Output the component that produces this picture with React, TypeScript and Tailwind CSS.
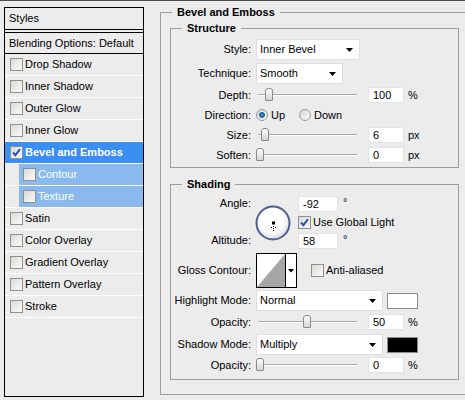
import React from "react";

const styleRows: { name: string; checked?: boolean; selected?: boolean; sub?: boolean }[] = [
  { name: "Drop Shadow" },
  { name: "Inner Shadow" },
  { name: "Outer Glow" },
  { name: "Inner Glow" },
  { name: "Bevel and Emboss", checked: true, selected: true },
  { name: "Contour", sub: true },
  { name: "Texture", sub: true },
  { name: "Satin" },
  { name: "Color Overlay" },
  { name: "Gradient Overlay" },
  { name: "Pattern Overlay" },
  { name: "Stroke" },
];

function Checkbox({ checked = false }: { checked?: boolean }) {
  return (
    <span className="flex h-[13px] w-[13px] shrink-0 items-center justify-center border border-[#8f8f8f] bg-gradient-to-br from-[#d9d9d4] to-[#fbfbfa]">
      {checked && (
        <svg width="9" height="9" viewBox="0 0 9 9">
          <path d="M1 4.5 L3.4 7.2 L8 1.2" fill="none" stroke="#2a4fb4" strokeWidth="1.9" />
        </svg>
      )}
    </span>
  );
}

function Radio({ checked = false }: { checked?: boolean }) {
  return (
    <span className="flex h-[12px] w-[12px] shrink-0 items-center justify-center rounded-full border border-[#9a9a9a] bg-gradient-to-br from-[#d6d6d2] to-[#fafafa]">
      {checked && <span className="h-[6px] w-[6px] rounded-full border border-[#1b4f86] bg-[#2f86c9]" />}
    </span>
  );
}

function Select({ value, className }: { value: string; className: string }) {
  return (
    <div className={`flex h-[21px] items-center justify-between border border-[#dedede] bg-white pl-[3px] pr-[6px] ${className}`}>
      <span>{value}</span>
      <svg width="7" height="4" viewBox="0 0 7 4">
        <path d="M0 0 H7 L3.5 4 Z" fill="#000" />
      </svg>
    </div>
  );
}

function NumInput({ value }: { value: string }) {
  return (
    <div className="flex h-[16px] w-[36px] items-center border border-[#e2e2e2] bg-white pl-[4px]">
      {value}
    </div>
  );
}

function Slider({ pos }: { pos: number }) {
  return (
    <div className="relative flex h-[16px] w-[104px] items-center">
      <div className="ml-[2px] h-[2px] w-[99px] border-t border-[#a9a9a9] border-b border-b-white" />
      <div
        className="absolute top-[1px] h-[13px] w-[8px] rounded-t-[3px] rounded-b-[1px] border border-[#8a8a8a] bg-gradient-to-b from-white to-[#d5d5d5]"
        style={{ left: pos }}
      />
    </div>
  );
}

function Row({ label, children, className = "" }: { label: string; children: React.ReactNode; className?: string }) {
  return (
    <div className={`flex items-center ${className}`}>
      <div className="w-[80px] shrink-0 text-right">{label}</div>
      <div className="ml-[5px] flex items-center">{children}</div>
    </div>
  );
}

function AngleDial() {
  return (
    <svg width="36" height="36" viewBox="0 0 36 36">
      <defs>
        <radialGradient id="dial" cx="0.45" cy="0.4" r="0.6">
          <stop offset="0.6" stopColor="#ffffff" />
          <stop offset="1" stopColor="#d9dce6" />
        </radialGradient>
      </defs>
      <circle cx="18" cy="18" r="16.5" fill="url(#dial)" stroke="#50608c" strokeWidth="2" />
      <rect x="17" y="16.5" width="3" height="3" fill="#000" />
      <g fill="#000">
        <rect x="18" y="21" width="1" height="1" />
        <rect x="18" y="23" width="1" height="1" />
        <rect x="16" y="22" width="1" height="1" />
        <rect x="20" y="22" width="1" height="1" />
        <rect x="18" y="25" width="1" height="1" />
      </g>
    </svg>
  );
}

function GlossContour() {
  return (
    <svg width="41" height="35" viewBox="0 0 41 35">
      <rect x="0.5" y="0.5" width="40" height="34" fill="#fff" stroke="#000" />
      <polygon points="1,34 29,1 29,34" fill="#a6a6a6" />
      <line x1="29.5" y1="1" x2="29.5" y2="34" stroke="#000" />
      <path d="M32 16 H38 L35 19.5 Z" fill="#000" />
    </svg>
  );
}

export default function App() {
  return (
    <div className="flex h-[400px] w-[465px] overflow-hidden border-t border-[#4e4e4e] bg-[#ececec] font-['Liberation_Sans',Arial,sans-serif] text-[11px] leading-[13px] text-black">
      <div className="ml-[4px] mt-[6px] flex h-[390px] w-[140px] shrink-0 flex-col border border-black">
        <div className="flex h-[22px] items-center border-b border-black pl-[4px]">Styles</div>
        <div className="h-[2px]" />
        <div className="flex h-[22px] items-center border-y border-black pl-[4px]">Blending Options: Default</div>
        {styleRows.map((r) => (
          <div key={r.name} className={`flex h-[22px] border-b border-white ${r.sub ? "pl-[14px]" : ""}`}>
            <div
              className={`flex flex-1 items-center gap-[2px] ${r.sub ? "bg-[#8ab9ee] pl-[4px] text-white" : "pl-[5px]"} ${
                r.selected ? "bg-[#3b8ef3] font-bold text-white" : ""
              }`}
            >
              <Checkbox checked={r.checked} />
              <span>{r.name}</span>
            </div>
          </div>
        ))}
      </div>

      <fieldset className="ml-[16px] mt-[5px] h-[389px] w-[330px] shrink-0 border border-[#9d9d9d] pl-[9px]">
        <legend className="ml-[2px] px-[5px] font-bold">Bevel and Emboss</legend>

        <fieldset className="mt-[3px] w-[289px] border border-[#9d9d9d] pb-[4px] pt-[4px]">
          <legend className="ml-[11px] px-[5px] font-bold">Structure</legend>
          <Row label="Style:" className="h-[21px]">
            <Select value="Inner Bevel" className="w-[104px]" />
          </Row>
          <Row label="Technique:" className="mt-[3px] h-[21px]">
            <Select value="Smooth" className="w-[87px]" />
          </Row>
          <Row label="Depth:" className="mt-[3px] h-[16px]">
            <Slider pos={9} />
            <div className="ml-[8px]">
              <NumInput value="100" />
            </div>
            <span className="ml-[4px]">%</span>
          </Row>
          <Row label="Direction:" className="mt-[4px] h-[16px]">
            <Radio checked />
            <span className="ml-[3px]">Up</span>
            <span className="ml-[14px]">
              <Radio />
            </span>
            <span className="ml-[3px]">Down</span>
          </Row>
          <Row label="Size:" className="mt-[4px] h-[16px]">
            <Slider pos={5} />
            <div className="ml-[8px]">
              <NumInput value="6" />
            </div>
            <span className="ml-[4px]">px</span>
          </Row>
          <Row label="Soften:" className="mt-[4px] h-[16px]">
            <Slider pos={0} />
            <div className="ml-[8px]">
              <NumInput value="0" />
            </div>
            <span className="ml-[4px]">px</span>
          </Row>
        </fieldset>

        <fieldset className="mt-[10px] w-[289px] border border-[#9d9d9d] pb-[6px] pt-[5px]">
          <legend className="ml-[11px] px-[5px] font-bold">Shading</legend>
          <div className="flex h-[54px]">
            <div className="flex w-[80px] shrink-0 flex-col justify-between pb-[3px] pt-[1px] text-right">
              <span>Angle:</span>
              <span>Altitude:</span>
            </div>
            <div className="ml-[4px] mt-[9px]">
              <AngleDial />
            </div>
            <div className="ml-[7px] flex flex-col">
              <div className="flex h-[16px] items-start">
                <div className="flex h-[16px] w-[40px] items-center border border-[#e2e2e2] bg-white pl-[4px]">-92</div>
                <span className="ml-[5px]">°</span>
              </div>
              <div className="mt-[4px] flex h-[13px] items-center gap-[2px]">
                <Checkbox checked />
                <span>Use Global Light</span>
              </div>
              <div className="mt-[4px] flex h-[16px] items-start">
                <div className="flex h-[16px] w-[40px] items-center border border-[#e2e2e2] bg-white pl-[4px]">58</div>
                <span className="ml-[5px]">°</span>
              </div>
            </div>
          </div>
          <Row label="Gloss Contour:" className="mt-[3px] h-[35px]">
            <GlossContour />
            <span className="ml-[14px]">
              <Checkbox />
            </span>
            <span className="ml-[2px]">Anti-aliased</span>
          </Row>
          <Row label="Highlight Mode:" className="mt-[2px] h-[21px]">
            <Select value="Normal" className="w-[127px]" />
            <div className="ml-[4px] h-[16px] w-[31px] border border-[#8c8c8c] bg-white" />
          </Row>
          <Row label="Opacity:" className="mt-[3px] h-[16px]">
            <Slider pos={47} />
            <div className="ml-[8px]">
              <NumInput value="50" />
            </div>
            <span className="ml-[4px]">%</span>
          </Row>
          <Row label="Shadow Mode:" className="mt-[4px] h-[21px]">
            <Select value="Multiply" className="w-[127px]" />
            <div className="ml-[4px] h-[16px] w-[31px] border border-[#8c8c8c] bg-black" />
          </Row>
          <Row label="Opacity:" className="mt-[2px] h-[16px]">
            <Slider pos={0} />
            <div className="ml-[8px]">
              <NumInput value="0" />
            </div>
            <span className="ml-[4px]">%</span>
          </Row>
        </fieldset>
      </fieldset>
    </div>
  );
}
